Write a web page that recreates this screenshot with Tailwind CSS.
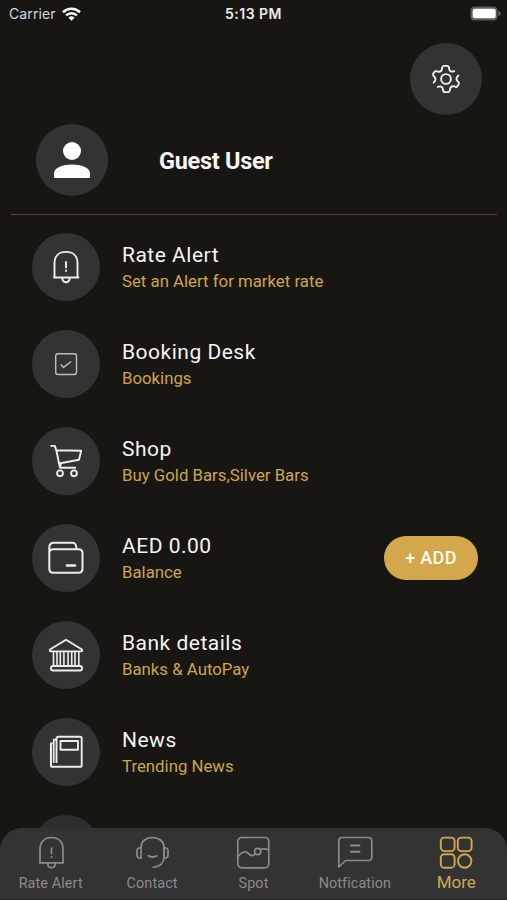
<!DOCTYPE html>
<html lang="en">
<head>
    <meta charset="UTF-8">
    <meta name="viewport" content="width=device-width, initial-scale=1.0">
    <title>More</title>
    <script src="https://cdn.jsdelivr.net/npm/@tailwindcss/browser@4"></script>
</head>
<body class="bg-[#171612] font-['Roboto',sans-serif] text-[#f4f4f3]">

    <div class="relative h-[900px] w-[507px] overflow-hidden">

        <!-- Status bar -->
        <div class="grid h-7 grid-cols-3 items-center pb-px pl-[9px] pr-[6px] font-['Inter',sans-serif] text-[14px]">
            <div class="flex items-center gap-[6px] text-[#d8d8d6]">
                <span class="tracking-[0.1px]">Carrier</span>
                <svg class="h-[14px] w-[19px]" viewBox="0 0 19 14" fill="none" stroke="#fff" stroke-width="2.6">
                    <path d="M1 5.2a12.2 12.2 0 0 1 17 0"/>
                    <path d="M4.1 8.4a7.7 7.7 0 0 1 10.8 0"/>
                    <path d="M9.5 13.8 6.5 10.8a4.3 4.3 0 0 1 6 0z" fill="#fff" stroke="none"/>
                </svg>
            </div>
            <span class="pr-[3px] text-center font-semibold tracking-[0.5px] text-[#ececea]">5:13 PM</span>
            <svg class="h-[15px] w-[31px] justify-self-end" viewBox="0 0 31 15">
                <rect x="0.5" y="0.5" width="27" height="14" rx="4" fill="#5b5b59"/>
                <rect x="2.7" y="2.8" width="23" height="9.4" rx="2" fill="#fff"/>
                <path d="M28.5 5v5c1.2-.4 2-1.3 2-2.5s-.8-2.1-2-2.5z" fill="#777"/>
            </svg>
        </div>

        <!-- Settings -->
        <div class="flex justify-end pr-[25px] pt-[15px]">
            <button class="flex size-[72px] items-center justify-center rounded-full bg-[#333333]">
                <svg class="size-[30px]" viewBox="0 0 30 30" fill="none" stroke="#f0f0f0" stroke-width="1.9" stroke-linecap="round" stroke-linejoin="round">
                    <circle cx="15" cy="15" r="4.9"/>
                    <path d="M2.600 18.500c2-1.300 2.600-3.800 1-5.500-.6-.6-1.300-1-1.500-1.900-.1-1 1.200-3.200 2-3.900 1-.7 1.800.3 3.100.5 2 .3 3.500-.9 3.800-2.900.2-1.400 0-2.700 1.600-2.900h3.500c1.900 0 1.800 1.300 2 2.800.3 2.600 2.600 3.700 5 2.400"/>
                    <path d="M27.400 11.500c-2 1.300-2.600 3.800-1 5.500.6.6 1.300 1 1.500 1.900.1 1-1.200 3.200-2 3.900-1 .7-1.800-.3-3.100-.5-2-.3-3.500.9-3.800 2.900-.2 1.400 0 2.700-1.600 2.900h-3.500c-1.900 0-1.800-1.300-2-2.800-.3-2.600-2.600-3.700-5-2.400"/>
                </svg>
            </button>
        </div>

        <!-- Profile -->
        <div class="mt-[9px] flex items-center gap-[51px] pl-9">
            <div class="flex size-[72px] items-center justify-center rounded-full bg-[#333333]">
                <svg class="size-[36px]" viewBox="0 0 36 36" fill="#fff">
                    <circle cx="18" cy="9" r="9"/>
                    <path d="M0 31.500C0 25.500 9 22.500 18 22.500s18 3 18 9v3.200c0 .8-.5 1.300-1.300 1.300H1.300C.5 36 0 35.500 0 34.700z"/>
                </svg>
            </div>
            <h1 class="pt-0.5 text-[23.5px] leading-7 font-bold tracking-[-0.3px] text-[#f6f6f6]">Guest User</h1>
        </div>

        <hr class="mt-[18px] ml-[11px] w-[486px] border-[#5a4330]">

        <!-- Menu -->
        <ul class="mt-[18px] flex flex-col gap-[29px] pl-8 pr-[29px]">
            <li class="flex h-[68px] items-center gap-[22px]">
                <div class="flex size-[68px] items-center justify-center rounded-full bg-[#333333]">
                    <svg class="size-9" viewBox="0 0 36 36" fill="none" stroke="#ededed" stroke-width="1.9" stroke-linecap="round" stroke-linejoin="round">
                        <path d="M6.500 28.500V14C6.500 7 11 2.900 18 2.900S29.500 7 29.500 14v14.500M6 28.500h24.500M14.300 28.800c0 2.800 1.500 4.400 3.700 4.400s3.700-1.600 3.700-4.400"/>
                        <path d="M18 13v5.500M18 21.500v.6"/>
                    </svg>
                </div>
                <div>
                    <h2 class="text-[21px] leading-[28px] tracking-[0.5px]">Rate Alert</h2>
                    <p class="text-[16.8px] leading-[25px] text-[#cda54b]">Set an Alert for market rate</p>
                </div>
            </li>
            <li class="flex h-[68px] items-center gap-[22px]">
                <div class="flex size-[68px] items-center justify-center rounded-full bg-[#333333]">
                    <svg class="size-9" viewBox="0 0 36 36" fill="none" stroke="#bdbdbd" stroke-width="1.4" stroke-linecap="round" stroke-linejoin="round">
                        <rect x="7.700" y="7.700" width="20.800" height="20.800" rx="2.500"/>
                        <path d="m13 18.800 2.500 2.600 7.300-5.700"/>
                    </svg>
                </div>
                <div>
                    <h2 class="text-[21px] leading-[28px] tracking-[0.5px]">Booking Desk</h2>
                    <p class="text-[16.8px] leading-[25px] text-[#cda54b]">Bookings</p>
                </div>
            </li>
            <li class="flex h-[68px] items-center gap-[22px]">
                <div class="flex size-[68px] items-center justify-center rounded-full bg-[#333333]">
                    <svg class="size-9" viewBox="0 0 36 36" fill="none" stroke="#ededed" stroke-width="1.9" stroke-linecap="round" stroke-linejoin="round">
                        <path d="M3.200 2.900h3.600l1.500 4.400L12 24.800h15.200M8.300 7.300l24.900.4L31 16.800l-20.200 3.700M12 24.800l1-4.700"/>
                        <circle cx="12" cy="30.300" r="2.900"/>
                        <circle cx="26" cy="30.300" r="2.900"/>
                    </svg>
                </div>
                <div>
                    <h2 class="text-[21px] leading-[28px] tracking-[0.5px]">Shop</h2>
                    <p class="text-[16.8px] leading-[25px] text-[#cda54b]">Buy Gold Bars,Silver Bars</p>
                </div>
            </li>
            <li class="flex h-[68px] items-center gap-[22px]">
                <div class="flex size-[68px] items-center justify-center rounded-full bg-[#333333]">
                    <svg class="size-9" viewBox="0 0 36 36" fill="none" stroke="#ededed" stroke-width="2" stroke-linecap="round" stroke-linejoin="round">
                        <path d="M28.500 9.300C28.500 5 27.200 2.800 24.500 2.800H6c-3 0-4.700 1.700-4.700 4.500v21.500c0 2.600 1.300 4 4 4h25.200c2.600 0 4-1.400 4-4V13.300c0-2.600-1.400-4-4-4H5.300c-2.700 0-4 1.400-4 4"/>
                        <path d="M19 25.500h8" stroke-width="2.600"/>
                    </svg>
                </div>
                <div class="flex-1">
                    <h2 class="text-[21px] leading-[28px] tracking-[0.5px]">AED 0.00</h2>
                    <p class="text-[16.8px] leading-[25px] text-[#cda54b]">Balance</p>
                </div>
                <button class="h-11 w-[94px] rounded-full bg-[#d3a74b] pb-px text-[18px] font-medium tracking-[0.3px] text-[#fffaf0]">+ ADD</button>
            </li>
            <li class="flex h-[68px] items-center gap-[22px]">
                <div class="flex size-[68px] items-center justify-center rounded-full bg-[#333333]">
                    <svg class="size-9" viewBox="0 0 36 36" fill="none" stroke="#ededed" stroke-width="1.9" stroke-linejoin="round">
                        <path d="M18 2.800 34 12.500c.5 1.300.3 1.900-.8 1.900H2.800c-1.100 0-1.300-.6-.8-1.900z"/>
                        <path d="M5.500 15v14M9 15v14M12.300 15v14M15.900 15v14M20.100 15v14M23.700 15v14M27 15v14M30.800 15v14" stroke-width="1.600"/>
                        <rect x="3" y="29" width="31" height="4.500" rx="2"/>
                    </svg>
                </div>
                <div>
                    <h2 class="text-[21px] leading-[28px] tracking-[0.5px]">Bank details</h2>
                    <p class="text-[16.8px] leading-[25px] text-[#cda54b]">Banks &amp; AutoPay</p>
                </div>
            </li>
            <li class="flex h-[68px] items-center gap-[22px]">
                <div class="flex size-[68px] items-center justify-center rounded-full bg-[#333333]">
                    <svg class="size-9" viewBox="0 0 36 36" fill="none" stroke="#ededed" stroke-width="1.9" stroke-linejoin="round">
                        <path d="M8.500 29V4.500c0-1 .6-1.700 1.600-1.700h22c1 0 1.600.6 1.600 1.600v26.800c0 1-.6 1.600-1.600 1.600H4.500c-1 0-1.600-.6-1.600-1.600V9.500h1.800"/>
                        <path d="M8.500 5.700H5.700V29M2.900 12v19" stroke-width="1.700"/>
                        <rect x="12.500" y="7" width="17.500" height="8.700"/>
                    </svg>
                </div>
                <div>
                    <h2 class="text-[21px] leading-[28px] tracking-[0.5px]">News</h2>
                    <p class="text-[16.8px] leading-[25px] text-[#cda54b]">Trending News</p>
                </div>
            </li>
            <li class="size-[68px] rounded-full bg-[#2e2e2d]"></li>
        </ul>

        <!-- Bottom navigation, over the scrolling menu -->
        <nav class="absolute inset-x-0 bottom-0 grid h-[72px] grid-cols-5 rounded-t-[22px] border-b border-[#222222] bg-[#333333] text-[14.4px] text-[#8b8b8b]">
            <a class="flex flex-col items-center gap-[5px] pt-[7px]">
                <svg class="size-9" viewBox="0 0 36 36" fill="none" stroke="currentColor" stroke-width="1.7" stroke-linecap="round" stroke-linejoin="round">
                    <path d="M7 27.800V14C7 7 11.500 2.500 18.500 2.500S30 7 30 14v13.800M6.500 27.800h24M14.800 28.500c0 2.600 1.500 4.200 3.700 4.200s3.700-1.600 3.700-4.200"/>
                    <path d="M18.500 13v5.500M18.500 21.500v.6"/>
                </svg>
                <span class="leading-4 tracking-[0.1px]">Rate Alert</span>
            </a>
            <a class="flex flex-col items-center gap-[5px] pt-[7px]">
                <svg class="size-9" viewBox="0 0 36 36" fill="none" stroke="currentColor" stroke-width="1.7" stroke-linecap="round" stroke-linejoin="round">
                    <path d="M7 12.500C7 6.500 11.500 2.500 18.500 2.500S30 6.500 30 12.500V22c0 6-3.500 9.500-10.800 10.400"/>
                    <path d="M7 12.500c-2.500.2-4 1.200-4 3v4.700c0 1.900 1.500 2.800 4 3zM30 12.500c2.500.2 4 1.200 4 3v4.700c0 1.900-1.500 2.800-4 3z"/>
                    <path d="M14.300 20.700c2.200 1.700 6.200 1.700 8.400 0" stroke-width="1.900"/>
                </svg>
                <span class="leading-4 tracking-[0.1px]">Contact</span>
            </a>
            <a class="flex flex-col items-center gap-[5px] pt-[7px]">
                <svg class="size-9" viewBox="0 0 36 36" fill="none" stroke="currentColor" stroke-width="1.7" stroke-linecap="round" stroke-linejoin="round">
                    <rect x="2.800" y="2.500" width="31" height="30.300" rx="4"/>
                    <path d="M3 21.500c4-5 8-6.300 11.200-2.400 1.500 1.900 3.800 2 5.800 0"/>
                    <circle cx="22.700" cy="16.500" r="3.100"/>
                    <path d="M25.300 14.800c2-1.300 5-1.300 8.200 0"/>
                </svg>
                <span class="leading-4 tracking-[0.1px]">Spot</span>
            </a>
            <a class="flex flex-col items-center gap-[5px] pt-[7px]">
                <svg class="size-9" viewBox="0 0 36 36" fill="none" stroke="currentColor" stroke-width="1.7" stroke-linecap="round" stroke-linejoin="round">
                    <path d="M1.800 32V6c0-2.300 1.200-3.500 3.500-3.500h26c2.300 0 3.500 1.200 3.500 3.500v16c0 2.300-1.200 3.500-3.500 3.500H8.500z"/>
                    <path d="M14 10.500h8.500M14 16.800h8.500" stroke-width="1.900"/>
                </svg>
                <span class="leading-4 tracking-[0.1px]">Notfication</span>
            </a>
            <a class="flex flex-col items-center gap-[2px] pt-[7px] text-[#d0a84c]">
                <svg class="size-9" viewBox="0 0 36 36" fill="none" stroke="currentColor" stroke-width="1.9">
                    <rect x="2.800" y="2.600" width="13.800" height="13.500" rx="3.500"/>
                    <rect x="19.800" y="2.600" width="13.800" height="13.500" rx="3.500"/>
                    <rect x="2.800" y="19.200" width="13.800" height="13.500" rx="3.500"/>
                    <circle cx="26.700" cy="26" r="6.700"/>
                </svg>
                <span class="text-[17px] leading-[18px]">More</span>
            </a>
        </nav>
    </div>

</body>
</html>
